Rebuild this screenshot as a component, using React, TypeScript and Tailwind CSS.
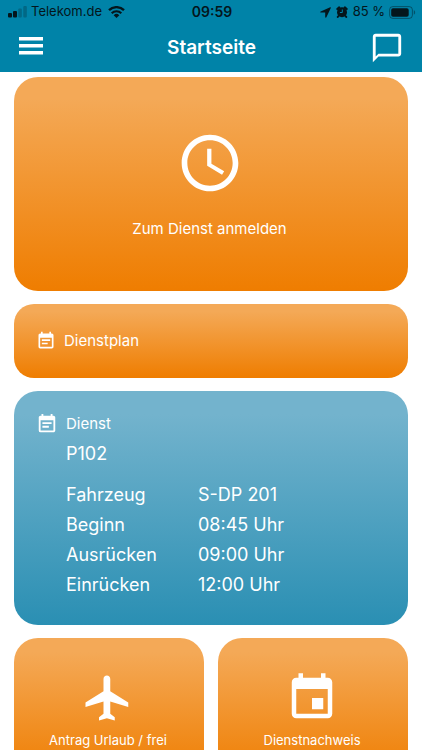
import React from 'react';
import { MdAccessTime, MdChatBubbleOutline, MdEvent, MdEventNote, MdFlight } from 'react-icons/md';

const shift = [
  { label: 'Fahrzeug', value: 'S-DP 201' },
  { label: 'Beginn', value: '08:45 Uhr' },
  { label: 'Ausrücken', value: '09:00 Uhr' },
  { label: 'Einrücken', value: '12:00 Uhr' },
];

function SignalIcon() {
  return (
    <svg className="w-5 h-3" viewBox="0 0 20 12" fill="currentColor">
      <rect x="0" y="7" width="4" height="4.500" rx="1" />
      <rect x="5" y="5" width="4" height="6.500" rx="1" />
      <rect x="10.300" y="2.500" width="3.500" height="9" rx="1" opacity="0.25" />
      <rect x="15.300" y="0" width="3.500" height="11.500" rx="1" opacity="0.25" />
    </svg>
  );
}

function WifiIcon() {
  return (
    <svg className="w-[17px] h-3" viewBox="0 0 17 12" fill="none" stroke="currentColor">
      <path d="M1 4.200a10.800 10.800 0 0 1 15 0" strokeWidth="2.400" />
      <path d="M3.700 7.200a6.900 6.900 0 0 1 9.600 0" strokeWidth="2.200" />
      <path d="M8.500 12 5.700 9.200a4 4 0 0 1 5.600 0z" fill="currentColor" stroke="none" />
    </svg>
  );
}

function LocationIcon() {
  return (
    <svg className="w-[11px] h-[11px]" viewBox="0 0 11 11" fill="currentColor">
      <path d="M10.200.300.700 4.500c-.7.300-.5 1.100.2 1.100h4.300v4.300c0 .8.900 1 1.200.300L10.800.900c.2-.5-.1-.8-.6-.6z" />
    </svg>
  );
}

function AlarmIcon() {
  return (
    <svg className="w-3 h-3" viewBox="0 0 12 12" fill="none" stroke="currentColor">
      <circle cx="6" cy="6.300" r="5" fill="currentColor" stroke="none" />
      <path d="M1.300 3 3.200 1.300M10.700 3 8.800 1.300M2.500 10l-.7.900M9.500 10l.7.900" strokeWidth="2" strokeLinecap="round" />
      <path d="M6.300 3.500v3H3.900" stroke="#0083a8" strokeWidth="1" />
    </svg>
  );
}

function BatteryIcon() {
  return (
    <svg className="w-[27px] h-[13px]" viewBox="0 0 27 13" fill="none">
      <rect x=".6" y=".6" width="22.800" height="11.800" rx="3.200" stroke="currentColor" strokeOpacity="0.45" />
      <rect x="2.200" y="2.200" width="17.500" height="8.600" rx="1.800" fill="currentColor" />
      <path d="M24.800 4.300c1.800.5 1.800 3.900 0 4.400z" fill="currentColor" fillOpacity="0.45" />
    </svg>
  );
}

function MenuIcon() {
  return (
    <svg className="w-6 h-[18px]" viewBox="0 0 24 18" fill="currentColor">
      <path d="M0 0h24v3.600H0zM0 7h24v3.600H0zM0 14h24v3.600H0z" />
    </svg>
  );
}

function StatusBar() {
  return (
    <div className="grid grid-cols-[1fr_auto_1fr] items-center h-6 pl-2 pr-[6px] text-[13px] text-[#04161c]">
      <div className="flex items-center">
        <SignalIcon />
        <span className="ml-[3px] mr-[6px]">Telekom.de</span>
        <WifiIcon />
      </div>
      <span className="text-sm font-semibold">09:59</span>
      <div className="flex items-center justify-end">
        <LocationIcon />
        <span className="mx-[5px]">
          <AlarmIcon />
        </span>
        <span className="mr-1">85 %</span>
        <BatteryIcon />
      </div>
    </div>
  );
}

export default function App() {
  return (
    <div className="h-screen flex flex-col bg-white text-white font-['Inter','Liberation_Sans',sans-serif]">
      <header className="shrink-0 bg-[#0083a8]">
        <StatusBar />
        <div className="grid grid-cols-[1fr_auto_1fr] items-center h-12 pl-[19px] pr-[18px]">
          <button type="button" aria-label="Menü" className="justify-self-start pb-1">
            <MenuIcon />
          </button>
          <h1 className="text-[19px] font-semibold">Startseite</h1>
          <button type="button" aria-label="Nachrichten" className="justify-self-end">
            <MdChatBubbleOutline className="w-[34px] h-[34px]" />
          </button>
        </div>
      </header>

      <main className="flex-1 min-h-0 overflow-y-auto [scrollbar-width:none] flex flex-col gap-[13px] px-[14px] pt-[5px] *:shrink-0">
        <button
          type="button"
          className="flex flex-col items-center gap-5 pt-[52px] pb-[50px] pr-[3px] rounded-3xl bg-linear-to-b/srgb from-[#f4a957] from-10% to-[#ef7d00]"
        >
          <MdAccessTime className="w-[68px] h-[68px]" />
          <span className="text-[15px] leading-6">Zum Dienst anmelden</span>
        </button>

        <button
          type="button"
          className="flex items-center gap-2 h-[74px] pl-[22px] rounded-[20px] bg-linear-to-b/srgb from-[#f4a957] from-10% to-[#ef7d00]"
        >
          <MdEventNote className="w-5 h-5" />
          <span className="text-[15px]">Dienstplan</span>
        </button>

        <section className="pt-[18px] pb-[25px] pl-[22px] rounded-3xl bg-linear-to-b/srgb from-[#73b3cd] from-10% to-[#2a8fb3]">
          <div className="flex items-center gap-2">
            <MdEventNote className="w-[22px] h-[22px]" />
            <h2 className="text-[15px] leading-[30px]">Dienst</h2>
          </div>
          <div className="pl-[30px] text-lg leading-[30px]">
            <p>P102</p>
            <dl className="mt-[11px]">
              {shift.map((row) => (
                <div key={row.label} className="flex">
                  <dt className="w-[132px]">{row.label}</dt>
                  <dd>{row.value}</dd>
                </div>
              ))}
            </dl>
          </div>
        </section>

        <div className="grid grid-cols-2 gap-[14px] pb-[14px]">
          <button
            type="button"
            className="flex flex-col items-center gap-[5px] pt-[33px] pb-7 pr-[2px] rounded-3xl bg-linear-to-b/srgb from-[#f4a957] from-10% to-[#ef7d00]"
          >
            <MdFlight className="w-[54px] h-[54px]" />
            <span className="text-[13px] leading-5">Antrag Urlaub / frei</span>
          </button>
          <button
            type="button"
            className="flex flex-col items-center gap-[5px] pt-[33px] pb-7 pr-[2px] rounded-3xl bg-linear-to-b/srgb from-[#f4a957] from-10% to-[#ef7d00]"
          >
            <MdEvent className="w-[54px] h-[54px]" />
            <span className="text-[13px] leading-5">Dienstnachweis</span>
          </button>
        </div>
      </main>
    </div>
  );
}
